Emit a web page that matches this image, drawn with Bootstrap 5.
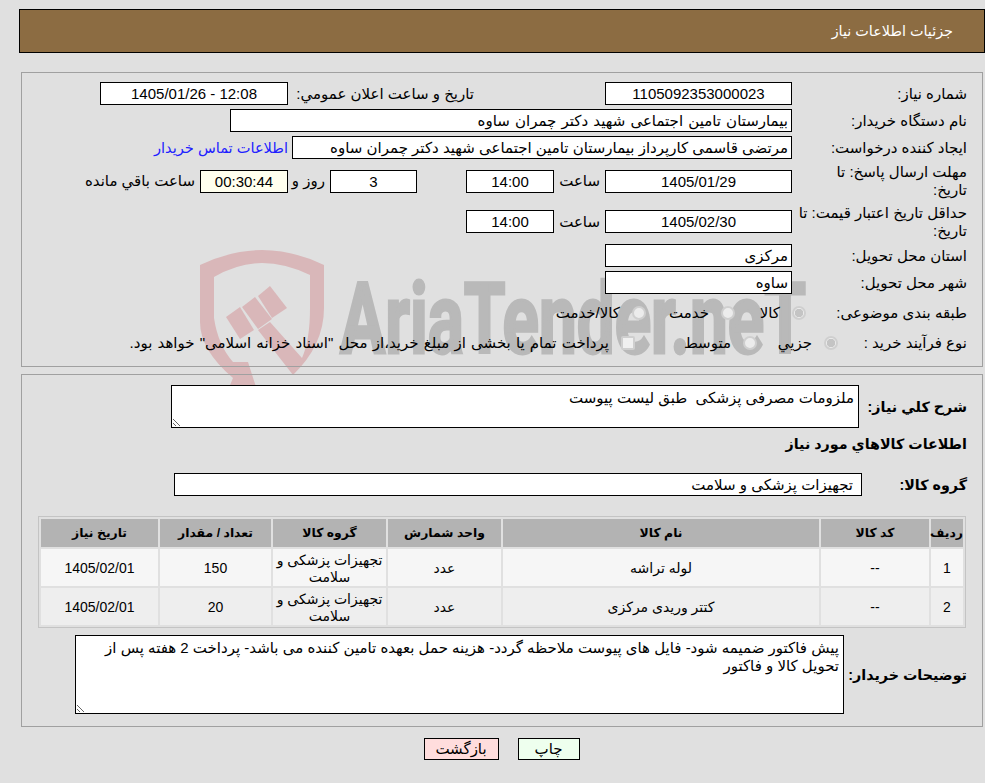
<!DOCTYPE html>
<html lang="fa" dir="rtl">
  <head>
    <meta charset="UTF-8" />
    <title>جزئیات اطلاعات نیاز</title>
    <link href="https://cdn.jsdelivr.net/npm/bootstrap@5.3.0/dist/css/bootstrap.min.css" rel="stylesheet" />
    <style>
      html, body { height: 783px; overflow: hidden; }
      body {
        position: relative;
        margin: 0;
        background: #e0e0e0;
        color: #000;
        font-family: "Liberation Sans", "DejaVu Sans", sans-serif;
        font-size: 15px;
        line-height: 18px;
      }
      .watermark { position: absolute; left: 0; top: 0; z-index: 0; }
      .watermark text { font-family: Roboto, sans-serif; font-weight: 700; stroke: #b9b9b9; stroke-width: 3px; }
      .page-wrap { position: relative; z-index: 1; }
      .page-head {
        height: 44px;
        margin: 9px 0 0 19px;
        padding-right: 31px;
        background: #8c6c42;
        border: 1px solid #000;
        color: #fff;
        font-size: 14.4px;
      }
      .info-box {
        margin: 19px 2px 0 21px;
        padding: 9px 15px 12px 0;
        border: 1px solid #a0a0a0;
      }
      .info-box + .info-box { margin-top: 7px; padding-top: 10px; padding-bottom: 12px; }
      .fld {
        height: 23px;
        padding: 0 3px;
        border: 1px solid #000;
        border-radius: 0;
        background: #fff;
        color: #000;
        font-size: 15px;
        line-height: 21px;
        flex: none;
      }
      .fld:disabled, .fld[readonly] { background: #fff; }
      .fld:focus { box-shadow: none; border-color: #000; background: #fff; }
      .fld-timer, .fld-timer[readonly] { background: #ffffee; }
      .note-fld {
        padding: 3px 4px;
        resize: both;
        min-height: 0;
        line-height: 18px;
      }
      .wide-words { word-spacing: 1px; }
      .row-a { min-height: 23px; }
      .row-two { height: 36px; }
      .row-three { height: 37px; }
      .row-pick { margin-top: 7px; }
      .lbl-main { width: 175px; flex: none; }
      .w-187 { width: 187px; }
      .w-188 { width: 188px; }
      .w-562 { width: 562px; }
      .w-500 { width: 500px; }
      .w-88 { width: 88px; }
      .w-87 { width: 87px; }
      .w-688 { width: 688px; }
      .w-769 { width: 769px; }
      .lbl-date { width: 181px; margin-right: 131px; flex: none; }
      .lbl-hour { width: 46px; margin-right: 5px; flex: none; }
      .lbl-day { width: 37px; margin-right: 5px; flex: none; }
      .gap-49 { margin-left: 49px; }
      .lbl-left { margin-right: 5px; }
      .buyer-link { margin-right: 4px; color: #2020ff; text-decoration: none; font-size: 14.6px; }
      .pick-a { width: 14px; height: 14px; margin: 0; flex: none; }
      .form-check-input.pick-a, .form-check-input.pick-a:checked {
        background: #ececec;
        border: 2px solid #cfcfcf;
        opacity: 1;
      }
      .form-check-input.pick-a[type=radio]:checked {
        background: radial-gradient(circle, #c4c4c4 0 4px, #ececec 4.5px);
      }
      .form-check-input.pick-a[type=checkbox] { border-radius: 2px; background: #f0f0f0; }
      .pick-item { display: flex; align-items: center; gap: 12px; flex: none; white-space: nowrap; }
      .subject-first { width: 161px; flex: none; }
      .subject-one { width: 71px; }
      .subject-two { width: 89px; }
      .proc-first { width: 129px; flex: none; }
      .proc-one { width: 81px; }
      .proc-two { width: 122px; }
      .pay-text { word-spacing: 1px; }
      .lbl-bold { font-size: 14.3px; font-weight: 700; flex: none; white-space: nowrap; }
      .lbl-desc { width: 108px; }
      .lbl-group { width: 105px; }
      .lbl-note { width: 123px; }
      .desc-fld { height: 43px; }
      .head-row { height: 30px; margin-top: 1px; }
      .group-row { margin-top: 14px; }
      .table-wrap { margin: 20px 1px 0 0; width: 928px; }
      .goods-table {
        width: 928px;
        margin: 0;
        border: 1px solid #c4c4c4;
        border-collapse: separate;
        border-spacing: 2px;
        table-layout: fixed;
        font-size: 14px;
        line-height: 17px;
        color: #000;
      }
      .goods-table > thead > tr > th {
        height: 28px;
        padding: 1px 0 0;
        background: #b3b3b3;
        font-size: 12.4px;
        text-align: center;
        vertical-align: middle;
        border: 0;
      }
      .goods-table > tbody > tr > td {
        height: 37px;
        padding: 2px 2px 0;
        text-align: center;
        vertical-align: middle;
        border: 0;
      }
      .goods-table > tbody > tr:nth-child(1) > td { background: #f6f6f6; }
      .goods-table > tbody > tr:nth-child(2) > td { background: #eeeeee; }
      .col-a { width: 32px; }
      .col-b { width: 108px; }
      .col-c { width: 316px; }
      .col-d { width: 113px; }
      .col-e { width: 111px; }
      .col-f { width: 117px; }
      .note-row { margin-top: 7px; }
      .note-fld-h { height: 79px; }
      .foot-btns { margin: 11px 3px 0 21px; gap: 19px; }
      .act-btn {
        height: 22px;
        padding: 0;
        border: 1px solid #000;
        border-radius: 0;
        color: #000;
        font-size: 15px;
        line-height: 20px;
      }
      .act-print { width: 62px; background: #eeffee; }
      .act-back { width: 75px; background: #ffdddd; }
    </style>
  </head>
  <body>
    <svg class="watermark" width="985" height="783" viewBox="0 0 985 783" aria-hidden="true">
      <g fill="#d9b7b9">
        <path d="M200 265 Q232 250 262 250 Q293 250 324 265 L324 308 Q324 345 293 375 L258 330 L270 322 L302 358 Q310 340 310 308 L310 275 Q285 263 262 263 Q238 263 214 277 L214 318 Q218 345 233 362 L248 362 L257 390 L228 390 L233 378 Q200 350 200 322 Z" />
        <path d="M226 317 L240 307 L254 330 L240 339 Z" />
        <path d="M242 307 L255 297 L272 319 L258 329 Z" />
        <path d="M258 296 L270 286 L287 308 L272 318 Z" />
      </g>
      <text x="340" y="353" font-size="98" fill="#b9b9b9" textLength="466" lengthAdjust="spacingAndGlyphs" direction="ltr" unicode-bidi="bidi-override">AriaTender.neT</text>
    </svg>

    <div class="page-wrap">
      <div class="page-head d-flex align-items-center">جزئیات اطلاعات نیاز</div>

      <div class="info-box">
        <div class="d-flex align-items-center row-a">
          <div class="lbl-main">شماره نیاز:</div>
          <input class="form-control fld w-187 text-center" readonly value="1105092353000023" />
          <div class="lbl-date">تاریخ و ساعت اعلان عمومي:</div>
          <input class="form-control fld w-188 lbl-left text-center" readonly value="12:08 - 1405/01/26" />
        </div>
        <div class="d-flex align-items-center row-a mt-1">
          <div class="lbl-main">نام دستگاه خریدار:</div>
          <input class="form-control fld w-562 wide-words" readonly value="بیمارستان تامین اجتماعی شهید دکتر چمران ساوه" />
        </div>
        <div class="d-flex align-items-center row-a mt-1">
          <div class="lbl-main">ایجاد کننده درخواست:</div>
          <input class="form-control fld w-500" readonly value="مرتضی قاسمی کارپرداز بیمارستان تامین اجتماعی شهید دکتر چمران ساوه" />
          <a class="buyer-link" href="#">اطلاعات تماس خریدار</a>
        </div>
        <div class="d-flex align-items-center row-two mt-1">
          <div class="lbl-main">مهلت ارسال پاسخ: تا<br />تاریخ:</div>
          <input class="form-control fld w-187 text-center" readonly value="1405/01/29" />
          <div class="lbl-hour">ساعت</div>
          <input class="form-control fld w-88 gap-49 text-center" readonly value="14:00" />
          <input class="form-control fld w-87 text-center" readonly value="3" />
          <div class="lbl-day">روز و</div>
          <input class="form-control fld fld-timer w-88 text-center" readonly value="00:30:44" />
          <div class="lbl-left">ساعت باقي مانده</div>
        </div>
        <div class="d-flex align-items-center row-three mt-1">
          <div class="lbl-main">حداقل تاریخ اعتبار قیمت: تا<br />تاریخ:</div>
          <input class="form-control fld w-187 text-center" readonly value="1405/02/30" />
          <div class="lbl-hour">ساعت</div>
          <input class="form-control fld w-88 text-center" readonly value="14:00" />
        </div>
        <div class="d-flex align-items-center row-a mt-1">
          <div class="lbl-main">استان محل تحویل:</div>
          <input class="form-control fld w-187" readonly value="مرکزی" />
        </div>
        <div class="d-flex align-items-center row-a mt-1">
          <div class="lbl-main">شهر محل تحویل:</div>
          <input class="form-control fld w-187" readonly value="ساوه" />
        </div>
        <div class="d-flex align-items-center row-a row-pick">
          <div class="subject-first">طبقه بندی موضوعی:</div>
          <label class="pick-item subject-one"><input class="form-check-input pick-a" type="radio" name="kind" checked disabled /><span>کالا</span></label>
          <label class="pick-item subject-two"><input class="form-check-input pick-a" type="radio" name="kind" disabled /><span>خدمت</span></label>
          <label class="pick-item"><input class="form-check-input pick-a" type="radio" name="kind" disabled /><span>کالا/خدمت</span></label>
        </div>
        <div class="d-flex align-items-center row-a row-pick">
          <div class="proc-first">نوع فرآیند خرید :</div>
          <label class="pick-item proc-one"><input class="form-check-input pick-a" type="radio" name="proc" checked disabled /><span>جزیي</span></label>
          <label class="pick-item proc-two"><input class="form-check-input pick-a" type="radio" name="proc" disabled /><span>متوسط</span></label>
          <label class="pick-item"><input class="form-check-input pick-a" type="checkbox" disabled /><span class="pay-text">پرداخت تمام یا بخشی از مبلغ خرید،از محل "اسناد خزانه اسلامی" خواهد بود.</span></label>
        </div>
      </div>

      <div class="info-box">
        <div class="d-flex align-items-center">
          <div class="lbl-bold lbl-desc">شرح کلي نیاز:</div>
          <textarea class="form-control fld note-fld desc-fld w-688" readonly>ملزومات مصرفی پزشکی  طبق لیست پیوست</textarea>
        </div>
        <div class="d-flex align-items-center head-row">
          <div class="lbl-bold">اطلاعات کالاهاي مورد نیاز</div>
        </div>
        <div class="d-flex align-items-center group-row">
          <div class="lbl-bold lbl-group">گروه کالا:</div>
          <input class="form-control fld w-688 pe-2" readonly value="تجهیزات پزشکی و سلامت" />
        </div>
        <div class="table-wrap">
          <table class="table goods-table">
            <colgroup>
              <col class="col-a" /><col class="col-b" /><col class="col-c" /><col class="col-d" /><col class="col-d" /><col class="col-e" /><col class="col-f" />
            </colgroup>
            <thead>
              <tr>
                <th>ردیف</th>
                <th>کد کالا</th>
                <th>نام کالا</th>
                <th>واحد شمارش</th>
                <th>گروه کالا</th>
                <th>تعداد / مقدار</th>
                <th>تاریخ نیاز</th>
              </tr>
            </thead>
            <tbody>
              <tr>
                <td>1</td>
                <td>--</td>
                <td>لوله تراشه</td>
                <td>عدد</td>
                <td>تجهیزات پزشکی و سلامت</td>
                <td>150</td>
                <td>1405/02/01</td>
              </tr>
              <tr>
                <td>2</td>
                <td>--</td>
                <td>کتتر وریدی مرکزی</td>
                <td>عدد</td>
                <td>تجهیزات پزشکی و سلامت</td>
                <td>20</td>
                <td>1405/02/01</td>
              </tr>
            </tbody>
          </table>
        </div>
        <div class="d-flex align-items-center note-row">
          <div class="lbl-bold lbl-note">توضیحات خریدار:</div>
          <textarea class="form-control fld note-fld note-fld-h w-769" readonly>پیش فاکتور ضمیمه شود- فایل های پیوست ملاحظه گردد- هزینه حمل بعهده تامین کننده می باشد- پرداخت 2 هفته پس از تحویل کالا و فاکتور</textarea>
        </div>
      </div>

      <div class="d-flex justify-content-center foot-btns">
        <button type="button" class="btn act-btn act-print">چاپ</button>
        <button type="button" class="btn act-btn act-back">بازگشت</button>
      </div>
    </div>
    <script src="https://cdn.jsdelivr.net/npm/bootstrap@5.3.0/dist/js/bootstrap.bundle.min.js"></script>
  </body>
</html>
